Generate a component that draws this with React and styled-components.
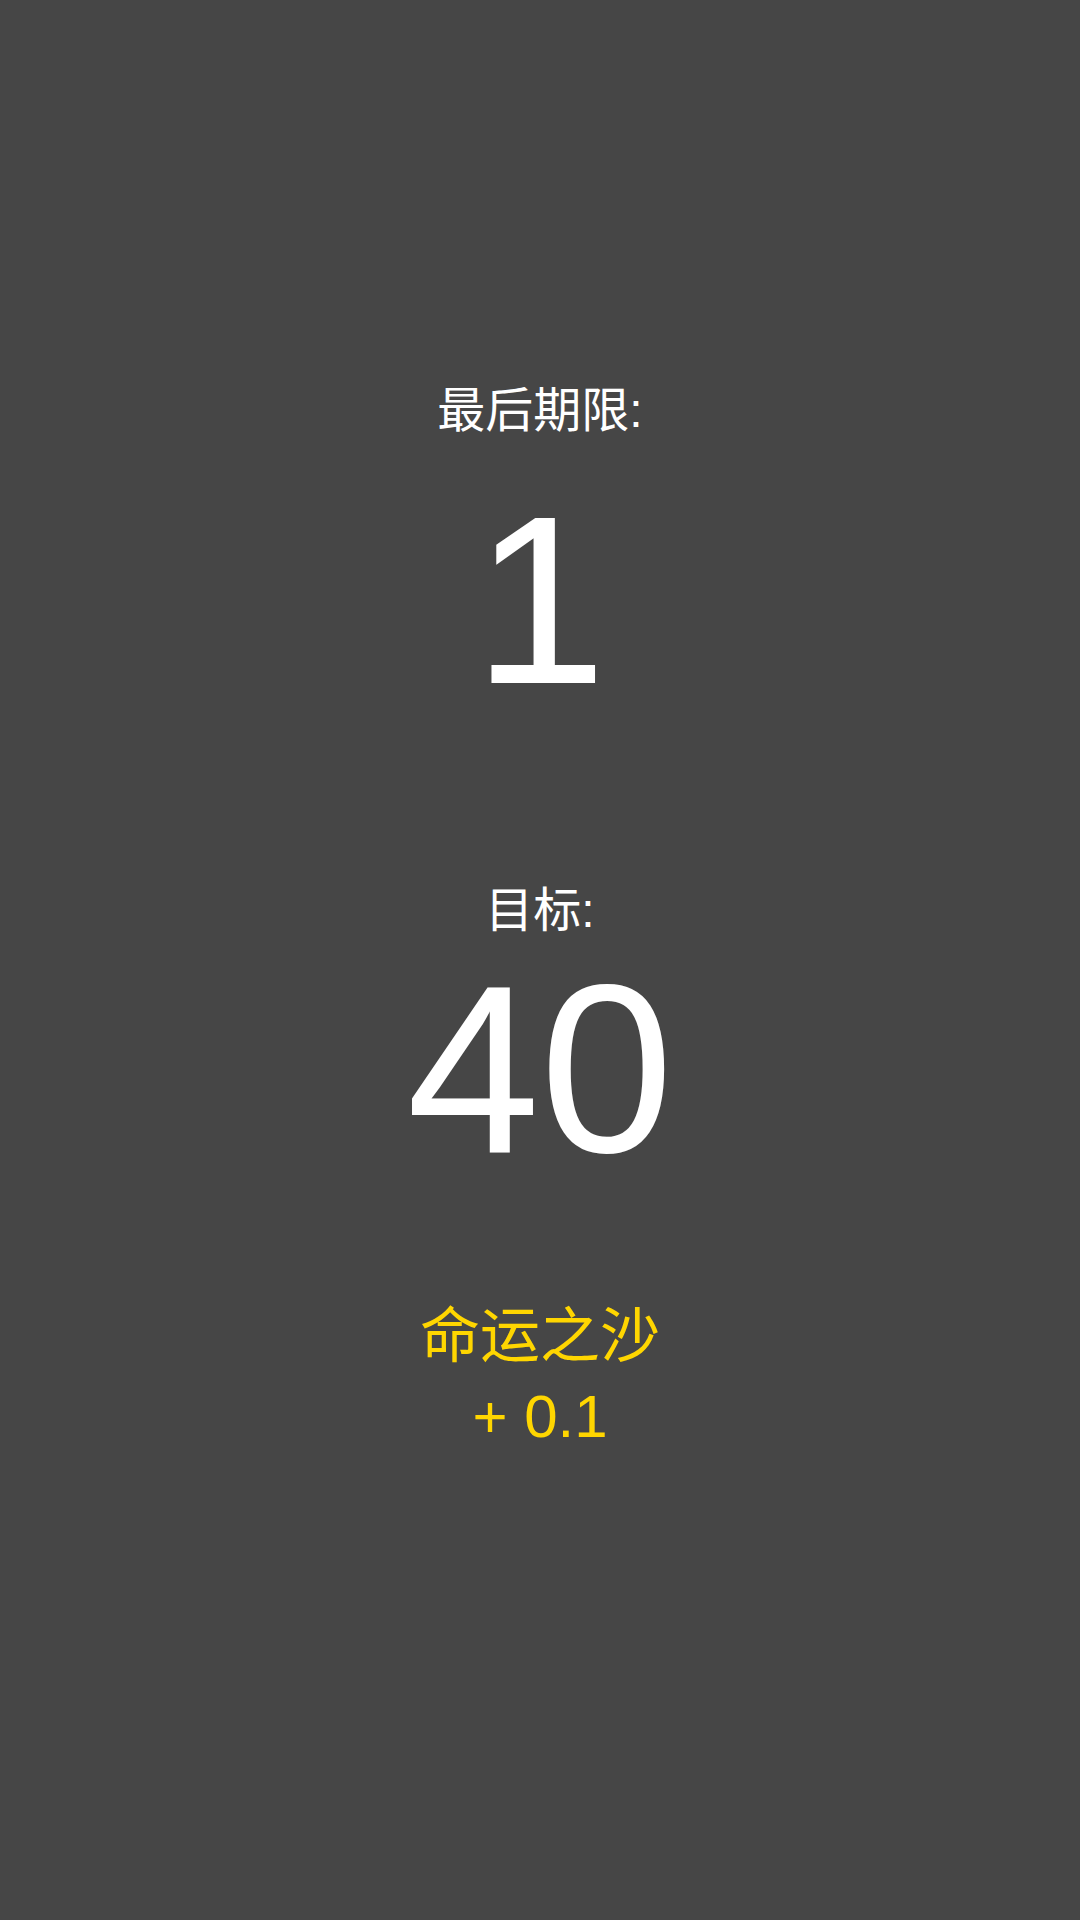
import styled, { createGlobalStyle } from 'styled-components';

const GlobalStyle = createGlobalStyle`
  html, body {
    margin: 0;
    padding: 0;
    background-color: #464646;
  }
  body {
    font-family: "Liberation Sans", "Noto Sans CJK SC", sans-serif;
  }
`;

function App() {
  return (
    <>
      <GlobalStyle />
      <StyledScreen>
        <StyledLabel>最后期限:</StyledLabel>
        <StyledBigNumber>1</StyledBigNumber>
        <StyledLabel $top={167}>目标:</StyledLabel>
        <StyledBigNumber $top={14}>40</StyledBigNumber>
        <StyledBonus>
          <span>命运之沙</span>
          <span>+ 0.1</span>
        </StyledBonus>
      </StyledScreen>
    </>
  );
}

const StyledScreen = styled.div`
  display: flex;
  flex-direction: column;
  align-items: center;
  width: 1080px;
  height: 1920px;
  padding-top: 387px;
  box-sizing: border-box;
  background-color: #464646;
  color: #ffffff;
`;

const StyledLabel = styled.div`
  font-size: 48px;
  line-height: 1;
  margin-top: ${(props) => props.$top || 0}px;
`;

const StyledBigNumber = styled.div`
  font-size: 240px;
  line-height: 1;
  margin-top: ${(props) => (props.$top === undefined ? 45 : props.$top)}px;
`;

const StyledBonus = styled.div`
  display: flex;
  flex-direction: column;
  align-items: center;
  margin-top: 108px;
  font-size: 60px;
  line-height: 80px;
  color: #ffd600;
`;

export default App;
